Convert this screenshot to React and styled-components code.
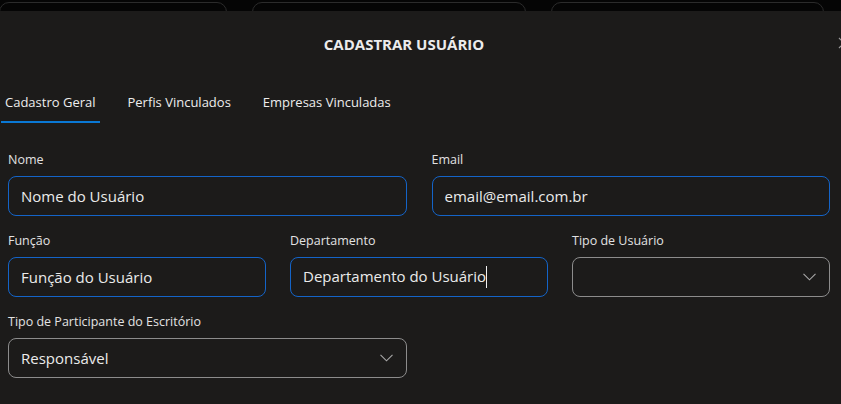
import React from "react";
import styled, { createGlobalStyle } from "styled-components";

const GlobalStyle = createGlobalStyle`
  html, body {
    margin: 0;
    padding: 0;
    background: #050505;
    overflow: hidden;
  }
  body {
    font-family: "Open Sans", "Noto Sans", sans-serif;
    color: #e6e6e6;
  }
`;

const Page = styled.div`
  width: 841px;
  height: 404px;
  overflow: hidden;
  background: #050505;
`;

const BackStrip = styled.div`
  height: 9px;
  overflow: hidden;
  display: grid;
  grid-template-columns: 228px 274px 273px;
  column-gap: 25px;
  padding-top: 2px;
  margin-left: -1px;
`;

const BackCard = styled.div`
  height: 40px;
  border: 1px solid #2b2b2b;
  border-radius: 10px;
`;

const Modal = styled.div`
  width: 880px;
  height: 395px;
  background: #1c1b1a;
`;

const Header = styled.div`
  display: grid;
  grid-template-columns: 808px 1fr;
  align-items: start;
  height: 66px;
  box-sizing: border-box;
  padding-top: 23px;
`;

const Title = styled.h2`
  margin: 0;
  text-align: center;
  font-size: 15px;
  line-height: 20px;
  font-weight: 700;
  color: #ececec;
`;

const CloseButton = styled.button`
  background: none;
  border: none;
  padding: 3px 0 0 30px;
  display: flex;
  color: #9a9a9a;
  cursor: pointer;
`;

const Tabs = styled.div`
  display: flex;
  gap: 24px;
  padding-left: 1px;
`;

const Tab = styled.div`
  padding: 15px 4px 9px;
  line-height: 20px;
  font-size: 13px;
  color: #ededed;
  border-bottom: 2px solid ${(p) => (p.$active ? "#0a78d4" : "transparent")};
`;

const Form = styled.div`
  width: 822px;
  padding: 28px 0 0 8px;
  display: flex;
  flex-direction: column;
  gap: 16px;
`;

const Row = styled.div`
  display: grid;
  grid-template-columns: ${(p) => `repeat(${p.$cols}, 1fr)`};
  column-gap: ${(p) => (p.$cols === 3 ? "24px" : "25px")};
`;

const Field = styled.div`
  display: flex;
  flex-direction: column;
  gap: 7px;
`;

const Label = styled.label`
  font-size: 12.5px;
  line-height: 18px;
  color: #e2e2e2;
`;

const Box = styled.div`
  height: 40px;
  box-sizing: border-box;
  border: 1px solid ${(p) => (p.$focus ? "#1464c8" : "#8c8c8c")};
  border-radius: 8px;
  display: flex;
  align-items: center;
  justify-content: space-between;
  padding: 0 13px 0 12px;
  font-size: 15px;
  color: #ebebeb;
`;

const Caret = styled.span`
  display: inline-block;
  width: 1px;
  height: 22px;
  background: #f0f0f0;
  vertical-align: middle;
`;

const Chevron = () => (
  <svg width="13" height="8" viewBox="0 0 13 8" fill="none">
    <path d="M0.5 0.8 L6.5 6.8 L12.5 0.8" stroke="#a8a8a8" strokeWidth="1.1" />
  </svg>
);

const CloseIcon = () => (
  <svg width="12" height="12" viewBox="0 0 12 12" fill="none">
    <path d="M1 1 L11 11 M11 1 L1 11" stroke="currentColor" strokeWidth="1.2" />
  </svg>
);

const Input = ({ value, focus, caret }) => (
  <Box $focus={focus}>
    <span>
      {value}
      {caret && <Caret />}
    </span>
  </Box>
);

const Select = ({ value }) => (
  <Box>
    <span>{value}</span>
    <Chevron />
  </Box>
);

export default function App() {
  return (
    <Page>
      <GlobalStyle />
      <BackStrip>
        <BackCard />
        <BackCard />
        <BackCard />
      </BackStrip>
      <Modal>
        <Header>
          <Title>CADASTRAR USUÁRIO</Title>
          <CloseButton>
            <CloseIcon />
          </CloseButton>
        </Header>
        <Tabs>
          <Tab $active>Cadastro Geral</Tab>
          <Tab>Perfis Vinculados</Tab>
          <Tab>Empresas Vinculadas</Tab>
        </Tabs>
        <Form>
          <Row $cols={2}>
            <Field>
              <Label>Nome</Label>
              <Input value="Nome do Usuário" focus />
            </Field>
            <Field>
              <Label>Email</Label>
              <Input value="email@email.com.br" focus />
            </Field>
          </Row>
          <Row $cols={3}>
            <Field>
              <Label>Função</Label>
              <Input value="Função do Usuário" focus />
            </Field>
            <Field>
              <Label>Departamento</Label>
              <Input value="Departamento do Usuário" focus caret />
            </Field>
            <Field>
              <Label>Tipo de Usuário</Label>
              <Select value="" />
            </Field>
          </Row>
          <Row $cols={2}>
            <Field>
              <Label>Tipo de Participante do Escritório</Label>
              <Select value="Responsável" />
            </Field>
          </Row>
        </Form>
      </Modal>
    </Page>
  );
}
